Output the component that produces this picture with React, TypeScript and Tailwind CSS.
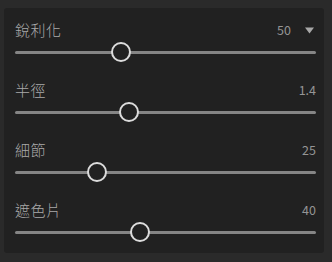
import React from 'react';

const rows = [
  { label: '銳利化', value: '50', pos: 106, menu: true },
  { label: '半徑', value: '1.4', pos: 114 },
  { label: '細節', value: '25', pos: 82 },
  { label: '遮色片', value: '40', pos: 125 },
];

function Row({ label, value, pos, menu }: { label: string; value: string; pos: number; menu?: boolean }) {
  return (
    <div className="flex flex-col pt-3 pb-1">
      <div className="flex h-5 items-center justify-between">
        <span className="text-[15px] font-light tracking-[0.5px] text-[#aaaaaa]">{label}</span>
        <div className="flex items-center">
          <span className="text-[12.5px] text-[#959595]">{value}</span>
          {menu && (
            <svg className="ml-[14px] mr-[2px]" width="9" height="7" viewBox="0 0 9 7">
              <path d="M0 0.5h9L4.5 6.5z" fill="#a8a8a8" />
            </svg>
          )}
        </div>
      </div>
      <div className="relative h-6 flex items-center">
        <div className="h-[3px] w-full rounded-full bg-[#858585]" />
        <div
          className="absolute top-[2px] h-5 w-5 rounded-full border-[2.5px] border-[#dcdcdc] bg-[#212121]"
          style={{ left: pos - 10 }}
        />
      </div>
    </div>
  );
}

export default function App() {
  return (
    <div
      className="h-[262px] w-[332px] bg-[#2a2a2a] pl-1 pt-2"
      style={{ fontFamily: '"Noto Sans CJK TC", "Noto Sans", sans-serif' }}
    >
      <div className="h-[245px] w-[320px] rounded-[3px] bg-[#212121] pl-[11px] pr-[8px]">
        {rows.map((r) => (
          <Row key={r.label} {...r} />
        ))}
      </div>
    </div>
  );
}
